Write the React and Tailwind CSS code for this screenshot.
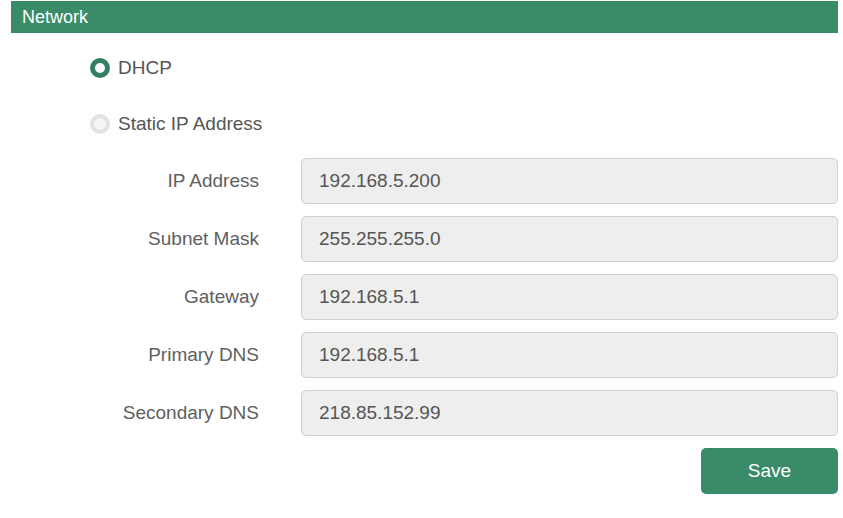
export default function App() {
  const fields = [
    { label: 'IP Address', value: '192.168.5.200' },
    { label: 'Subnet Mask', value: '255.255.255.0' },
    { label: 'Gateway', value: '192.168.5.1' },
    { label: 'Primary DNS', value: '192.168.5.1' },
    { label: 'Secondary DNS', value: '218.85.152.99' },
  ];

  return (
    <div className="w-[843px] h-[518px] bg-white pt-px pl-[11px] font-['Liberation_Sans',Arial,sans-serif] text-[19px] text-[#555]">
      <div className="w-[827px] h-[32px] bg-[#3a8b68] flex items-center pl-[11px] text-white text-[18px]">
        Network
      </div>

      <div className="pl-[79px] pt-[25px] flex flex-col gap-[36px]">
        <label className="flex items-center gap-[8px] h-[20px]">
          <span className="w-[20px] h-[20px] rounded-full border-[5px] border-[#338060] bg-white" />
          <span>DHCP</span>
        </label>
        <label className="flex items-center gap-[8px] h-[20px]">
          <span className="w-[20px] h-[20px] rounded-full border-[4px] border-[#e2e2e2] bg-[#f4f4f4]" />
          <span>Static IP Address</span>
        </label>
      </div>

      <div className="mt-[24px] flex flex-col gap-[12px]">
        {fields.map((f) => (
          <div key={f.label} className="flex items-center">
            <div className="w-[248px] text-right text-[#606060]">{f.label}</div>
            <div className="ml-[42px] w-[537px] h-[46px] rounded-[5px] border border-[#cfcfcf] bg-[#eeeeee] flex items-center pl-[17px]">
              {f.value}
            </div>
          </div>
        ))}
        <div className="flex justify-end w-[827px]">
          <button className="w-[137px] h-[46px] rounded-[5px] bg-[#3a8b68] text-white text-[19px]">
            Save
          </button>
        </div>
      </div>
    </div>
  );
}
